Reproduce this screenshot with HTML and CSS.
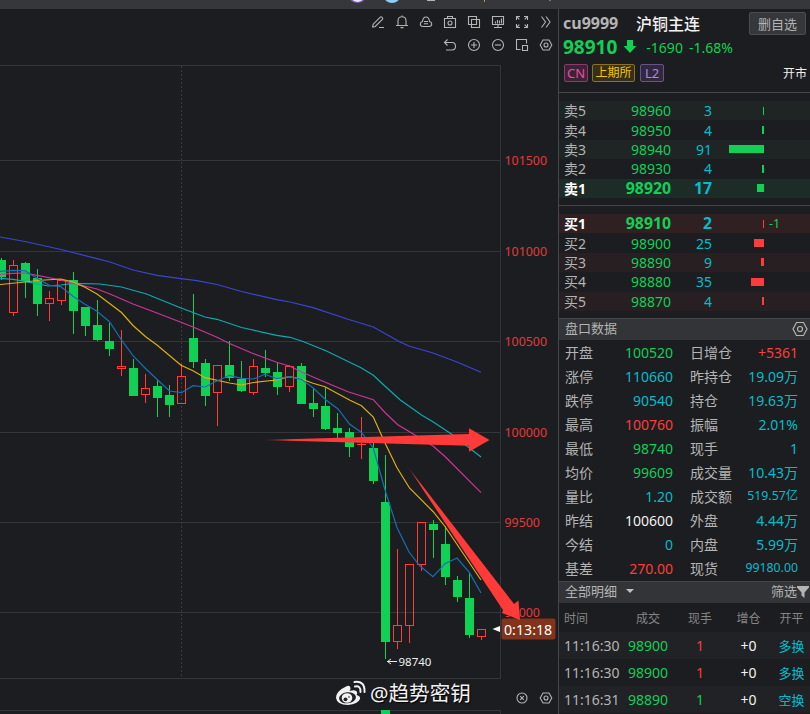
FILE: index.html
```html
<!DOCTYPE html>
<html lang="zh-CN">
<head>
    <meta charset="UTF-8">
    <meta name="viewport" content="width=device-width, initial-scale=1.0">
    <title>沪铜主连 cu9999</title>
    <link rel="stylesheet" href="styles.css">
</head>
<body>
    <div class="top-strip">
        <svg width="810" height="9" viewBox="0 0 810 9">
            <ellipse cx="357.500" cy="-2" rx="7.500" ry="5" fill="#7b5bc0"/>
            <ellipse cx="357.500" cy="-3" rx="6" ry="5" fill="#e9e4f5"/>
            <ellipse cx="392" cy="-4" rx="8" ry="7" fill="#8fcdf5"/>
            <rect x="427" y="0" width="8" height="1" fill="#b5b5b5"/>
            <rect x="484" y="0" width="1" height="2" fill="#d09050"/>
            <rect x="549" y="0" width="2" height="1" fill="#777"/>
        </svg>
    </div>
    <div class="main">
        <div class="chart-area">
            <div class="toolbar">
                <div class="tool-row">
                    <svg class="icon" viewBox="0 0 14 14"><path d="M1.500 12.300L2.200 9.200L9.300 2.100Q10 1.400 10.800 2.200L11.400 2.800Q12.100 3.500 11.400 4.300L4.300 11.500L1.500 12.300M8 12.500H13"/></svg>
                    <svg class="icon" viewBox="0 0 14 14"><path d="M1 10.500H13M3 10.500V5.800Q3 1.800 7 1.800Q11 1.800 11 5.800V10.500M5.500 12.600H8.500M7 .6V1.800"/></svg>
                    <svg class="icon" viewBox="0 0 14 14"><path d="M4 11.500Q1.300 11.500 1.300 9Q1.300 7 3.500 6.500Q4 2 7 2Q10 2 10.500 6.500Q12.700 7 12.700 9Q12.700 11.500 10 11.500ZM5 6.500H9M5 8.700H9"/></svg>
                    <svg class="icon" viewBox="0 0 14 14"><path d="M1.500 3.500H12.500V12.500H1.500ZM4.500 3.500V1.500H9.500V3.500"/><circle cx="7" cy="8" r="2"/></svg>
                    <svg class="icon" viewBox="0 0 14 14"><path d="M1.500 1.500H9.500V9.500H1.500ZM4.500 4.500H12.500V12.500H4.500Z"/></svg>
                    <svg class="icon" viewBox="0 0 14 14"><path d="M1.500 1.500H12.500V9.500H1.500ZM7 9.500V12.500M3 12.500H11M4.500 8.500V6.500M6.500 8.500V5M8.500 8.500V5.500M10.500 8.500V3.500"/></svg>
                    <svg class="icon" viewBox="0 0 14 14"><path d="M1.500 5V1.500H5M9 1.500H12.500V5M12.500 9V12.500H9M5 12.500H1.500V9M2 2L4.300 4.300M12 2L9.700 4.300M2 12L4.300 9.700M12 12L9.700 9.700"/></svg>
                    <svg class="icon" viewBox="0 0 14 14"><path d="M2.500 1.500L6.500 7L2.500 12.500M7 1.500L11 7L7 12.500"/></svg>
                </div>
                <div class="tool-row">
                    <svg class="icon" viewBox="0 0 14 14"><path d="M4.500 1.500L1.500 4.500L4.500 7.500M1.500 4.500H9Q12.500 4.500 12.500 8.300Q12.500 12 9 12H3"/></svg>
                    <svg class="icon" viewBox="0 0 14 14"><circle cx="7" cy="7" r="5.500"/><path d="M4 7H10M7 4V10"/></svg>
                    <svg class="icon" viewBox="0 0 14 14"><circle cx="7" cy="7" r="5.500"/><path d="M4 7H10"/></svg>
                    <svg class="icon" viewBox="0 0 14 14"><path d="M5.500 11.500H1.500V1.500H11.500V5.500M7.500 7.500H12.500V12.500H7.500Z"/></svg>
                    <svg class="icon" viewBox="0 0 14 14"><path d="M4 2H10L12.800 7L10 12H4L1.200 7Z"/><circle cx="7" cy="7" r="2"/></svg>
                </div>
            </div>
            <svg class="chart" id="chart" width="558" height="649" viewBox="0 65 558 649">
                <defs>
                    <linearGradient id="fadeH" x1="0" x2="1" y1="0" y2="0">
                        <stop offset="0" stop-color="#ff3a38" stop-opacity="0.200"/>
                        <stop offset="0.120" stop-color="#ff3a38"/>
                    </linearGradient>
                    <linearGradient id="fadeD" x1="0" x2="1" y1="0" y2="1">
                        <stop offset="0" stop-color="#ff3a38" stop-opacity="0.400"/>
                        <stop offset="0.120" stop-color="#ff3a38"/>
                    </linearGradient>
                </defs>
                <path class="grid" d="M0 65.500H500.500V678.500H0M0 160.500H500M0 251.500H500M0 341.500H500M0 432.500H500M0 522.500H500M0 612.500H500M0 710.500H500.500V714"/>
                <path class="grid dashed" d="M181.500 66V678"/>
                <g id="candles"></g>
                <rect class="down" x="381" y="710" width="9" height="4"/>
                <polyline class="ma" stroke="#3b45d4" points="0,237 25,241.500 61,249.500 97,258.700 110,262 133,270 157,275.300 181,278.700 197,280.700 217,284.500 241.500,291.500 276.700,299.700 290,302 313,307.700 348,319.300 373.300,327 400,342 409,346 433,353 457,362 481,372.300"/>
                <polyline class="ma" stroke="#09acb4" points="0,278.300 13,279.300 25,281.300 48,286 61,285 73,283.300 100,284 121.500,287 146.500,294 181,308 205,317 217,319.300 241.500,327.500 276.700,335.300 290,337.300 303,341.500 326.500,351 348,361.500 361.500,368 373.300,375.300 386.500,387.500 400,399.800 421.500,415 433.300,422 451.700,434.300 481,457"/>
                <polyline class="ma" stroke="#cd3599" points="0,274.500 12,273.300 25,273 37,275.300 61,280 73,283.300 97,289 110,294 133,304 157,313 181,322.300 193,327 217,337.300 229.500,343.500 253.500,353.700 276.700,362.300 290,366.300 301.500,372 326.500,382.700 348,391.700 373.300,399.700 385,412.500 397.500,424.500 416.500,436 433,446 445,456.500 481,492.700"/>
                <polyline class="ma" stroke="#ddb00b" points="0,284.500 25,282 37,280.500 61,279 73,282 85,287.300 97,294 121.500,312.500 133,325.500 146,337 157,345 181,365.300 193,370.700 205,377.700 229.500,383 241.500,385 253.500,382.500 276.700,380 289,376.700 301.500,379 313,383.300 325,386.700 350,400.300 361.500,405.700 373.300,417 385,443 397,467.700 409.500,488 433,511.500 445,526.500 481,580"/>
                <polyline class="ma" stroke="#176fb4" points="0,271.300 13,270.300 25,270.700 37,278.300 49.500,285.300 61,286.700 73,296.300 85,304.300 97,311.300 109.500,321.700 121.500,340 133,355.700 146,369 158,380.300 169.500,391 181.500,392.700 193,385.700 205,387 217,381 229.500,375.300 241.500,378.300 253.500,379 265,374.300 277,378.700 289,376.700 301.500,379.300 313,387.700 326,400 338,409 349.500,424 361.500,432.500 373.300,448 385,490 397,527.500 409,552 420,566 433,576.700 445,563.700 457,558 469.500,572.700 481,593"/>
                <g class="axis">
                    <text x="504.500" y="165">101500</text>
                    <text x="504.500" y="256">101000</text>
                    <text x="504.500" y="346">100500</text>
                    <text x="504.500" y="437">100000</text>
                    <text x="504.500" y="527">99500</text>
                    <text x="504.500" y="617">99000</text>
                </g>
                <path d="M387 661.500H397M391 659L387.500 661.500L391 664" fill="none" stroke="#e8e8e8"/>
                <text class="low-label" x="398.500" y="666">98740</text>
                <path d="M492.500 629L500 626V632Z" fill="#fff"/>
                <rect x="501.500" y="618.500" width="54" height="21" rx="2" fill="#80341b"/>
                <path d="M262 440L469 434V428.300L489.500 440L469 451.800V445.800Z" fill="url(#fadeH)"/>
                <path d="M408 467L503 610L502 613L520 620L518.500 600.500L514 604Z" fill="url(#fadeD)"/>
                <text class="countdown" x="504" y="635">0:13:18</text>
            </svg>
            <div class="watermark">
                <svg width="31" height="27" viewBox="0 0 31 27">
                    <path fill="#f1f1f1" d="M12 6Q15 5 15.500 8Q15.500 10 14.500 11Q21 9 22 12Q22.500 14 21.500 15Q26 16.500 25 19Q23 24 13 25Q2 25 1 18Q1 11 12 6Z"/>
                    <ellipse cx="12.500" cy="17.800" rx="8.500" ry="5.500" transform="rotate(-7 12.500 17.800)" fill="#202124"/>
                    <ellipse cx="12" cy="18" rx="5.300" ry="4.800" fill="#f1f1f1"/>
                    <circle cx="10.500" cy="19.300" r="1.900" fill="#202124"/>
                    <circle cx="14" cy="17" r=".8" fill="#202124"/>
                    <path d="M20 6.500Q26 5.500 25.500 12M19.500 2Q30 .5 29.500 12" fill="none" stroke="#f1f1f1" stroke-width="2" stroke-linecap="round"/>
                </svg>
                <span>@趋势密钥</span>
            </div>
            <div class="pane-tools">
                <svg class="icon" viewBox="0 0 14 14"><circle cx="7" cy="7" r="5"/><path d="M5.200 5.200L8.800 8.800M8.800 5.200L5.200 8.800"/></svg>
                <svg class="icon" viewBox="0 0 14 14"><path d="M4 2H10L12.800 7L10 12H4L1.200 7Z"/><circle cx="7" cy="7" r="2"/></svg>
            </div>
        </div>

        <div class="side">
            <div class="quote">
                <div class="name-row">
                    <span class="code">cu9999</span>
                    <span class="name">沪铜主连</span>
                    <button class="remove">删自选</button>
                </div>
                <div class="price-row">
                    <span class="price">98910</span>
                    <svg width="14" height="14" viewBox="0 0 14 14"><path d="M4 0H10V6H13.500L7 13L.5 6H4Z" fill="#12cf56"/></svg>
                    <span>-1690</span>
                    <span>-1.68%</span>
                </div>
                <div class="tag-row">
                    <span class="tag cn">CN</span>
                    <span class="tag ex">上期所</span>
                    <span class="tag l2">L2</span>
                    <span class="state">开市</span>
                </div>
            </div>

            <div class="book sell">
                <div class="level"><span>卖5</span><b>98960</b><i>3</i><em style="width: 1px"></em></div>
                <div class="level"><span>卖4</span><b>98950</b><i>4</i><em style="width: 2px"></em></div>
                <div class="level"><span>卖3</span><b>98940</b><i>91</i><em style="width: 35px"></em></div>
                <div class="level"><span>卖2</span><b>98930</b><i>4</i><em style="width: 2px"></em></div>
                <div class="level best"><span>卖1</span><b>98920</b><i>17</i><em style="width: 7px"></em></div>
            </div>
            <div class="book buy">
                <div class="level best"><span>买1</span><b>98910</b><i>2</i><em style="width: 1px"></em><small>-1</small></div>
                <div class="level"><span>买2</span><b>98900</b><i>25</i><em style="width: 10px"></em></div>
                <div class="level"><span>买3</span><b>98890</b><i>9</i><em style="width: 3px"></em></div>
                <div class="level"><span>买4</span><b>98880</b><i>35</i><em style="width: 13px"></em></div>
                <div class="level"><span>买5</span><b>98870</b><i>4</i><em style="width: 2px"></em></div>
            </div>

            <div class="section-bar">
                <span>盘口数据</span>
                <svg class="gear" width="16" height="16" viewBox="0 0 16 16"><path d="M4.500 1.500H11.500L15 8L11.500 14.500H4.500L1 8Z"/><circle cx="8" cy="8" r="2.500"/></svg>
            </div>
            <div class="stats">
                <span>开盘</span><b class="green">100520</b><span>日增仓</span><b class="red">+5361</b>
                <span>涨停</span><b>110660</b><span>昨持仓</span><b>19.09万</b>
                <span>跌停</span><b>90540</b><span>持仓</span><b>19.63万</b>
                <span>最高</span><b class="red">100760</b><span>振幅</span><b>2.01%</b>
                <span>最低</span><b class="green">98740</b><span>现手</span><b>1</b>
                <span>均价</span><b class="green">99609</b><span>成交量</span><b>10.43万</b>
                <span>量比</span><b>1.20</b><span>成交额</span><b class="small">519.57亿</b>
                <span>昨结</span><b class="white">100600</b><span>外盘</span><b>4.44万</b>
                <span>今结</span><b>0</b><span>内盘</span><b>5.99万</b>
                <span>基差</span><b class="red">270.00</b><span>现货</span><b class="small">99180.00</b>
            </div>

            <div class="section-bar detail-bar">
                <span>全部明细</span>
                <svg width="8" height="5" viewBox="0 0 8 5"><path d="M0 0H8L4 4Z" fill="#c0c0c0"/></svg>
                <span class="filter">筛选</span>
                <svg width="12" height="12" viewBox="0 0 12 12"><path d="M0 0H12V1.500L7.500 6.500V12L4.500 9.500V6.500L0 1.500Z" fill="#b5b5b5"/></svg>
            </div>
            <div class="trades">
                <div class="trade head"><span>时间</span><span>成交</span><span>现手</span><span>增仓</span><span>开平</span></div>
                <div class="trade"><span>11:16:30</span><span class="green">98900</span><span class="red">1</span><span class="white">+0</span><span class="cyan">多换</span></div>
                <div class="trade"><span>11:16:30</span><span class="green">98900</span><span class="red">1</span><span class="white">+0</span><span class="cyan">多换</span></div>
                <div class="trade"><span>11:16:31</span><span class="green">98890</span><span class="green">1</span><span class="white">+0</span><span class="cyan">空换</span></div>
            </div>
        </div>
    </div>
    <script src="chart.js"></script>
</body>
</html>
```
FILE: styles.css
```css
* {
    box-sizing: border-box;
}
body {
    margin: 0;
    width: 810px;
    height: 714px;
    overflow: hidden;
    background: #1c1d20;
    color: #b4b4b4;
    font-family: "Noto Sans", "Noto Sans CJK SC", sans-serif;
    font-size: 14px;
}
svg {
    display: block;
    flex: none;
}
.top-strip {
    height: 9px;
    background: #36373a;
}
.main {
    display: flex;
    height: 705px;
}
.chart-area {
    width: 558px;
    flex: none;
    position: relative;
}
.toolbar {
    height: 56px;
    padding: 6px 5px 0 0;
}
.tool-row {
    display: flex;
    justify-content: flex-end;
    gap: 10px;
    height: 23px;
}
.icon {
    width: 14px;
    height: 14px;
    fill: none;
    stroke: #b4b4b4;
    stroke-width: 1.1;
}
.grid {
    fill: none;
    stroke: #353639;
}
.dashed {
    stroke: #3c3d40;
    stroke-dasharray: 2 2;
}
.ma {
    fill: none;
    stroke-width: 1.2;
}
.down {
    fill: #12cf56;
}
.down-wick {
    stroke: #12cf56;
}
.up {
    fill: none;
    stroke: #ff3c3c;
}
.axis {
    fill: #e23a3a;
    font-size: 12.4px;
}
.low-label {
    fill: #f0f0f0;
    font-size: 11.5px;
}
.countdown {
    fill: #fff;
    font-size: 14.2px;
}
.watermark {
    position: absolute;
    left: 335px;
    top: 670px;
    display: flex;
    align-items: center;
    gap: 4px;
    color: #f1f1f1;
    font-size: 20.6px;
    line-height: 28px;
    text-shadow: 1px 1px 1px #000;
    white-space: nowrap;
}
.pane-tools {
    position: absolute;
    right: 5px;
    bottom: 9px;
    display: flex;
    gap: 10px;
}

.side {
    width: 252px;
    border-left: 1px solid #45464a;
    flex: none;
}
.quote {
    height: 84px;
    border-bottom: 1px solid #45464a;
    padding: 2px 4px 0 4px;
}
.name-row {
    display: flex;
    align-items: center;
    height: 24px;
}
.code {
    width: 73px;
    font-size: 16px;
    font-weight: 700;
}
.name {
    color: #f2f2f2;
    font-size: 16px;
    font-weight: 500;
}
.remove {
    margin-left: auto;
    width: 57px;
    height: 23px;
    padding: 0;
    background: #36373a;
    border: 1px solid #4b4c50;
    border-radius: 2px;
    color: #b4b4b4;
    font: 13px/19px "Noto Sans CJK SC", sans-serif;
}
.price-row {
    display: flex;
    align-items: center;
    height: 24px;
    color: #12cf56;
}
.price-row svg {
    margin: 0 9px 0 6px;
}
.price-row span + span {
    margin-left: 6px;
}
.price {
    font-size: 19px;
    font-weight: bold;
}
.tag-row {
    display: flex;
    align-items: center;
    margin: 5px -1px 0 0;
    height: 18px;
}
.tag {
    height: 18px;
    border: 1px solid;
    border-radius: 2px;
    font-size: 13px;
    line-height: 16px;
    text-align: center;
}
.cn {
    width: 24px;
    margin-left: 1px;
    color: #e84fa8;
    background: #3c2335;
    border-color: #8c3a6e;
}
.ex {
    width: 43px;
    margin: 0 5px 0 4px;
    color: #f5c400;
    background: #352f1c;
    border-color: #8b721c;
    font-size: 12px;
}
.l2 {
    width: 24px;
    color: #b086e8;
    background: #30293c;
    border-color: #68528a;
}
.state {
    margin-left: auto;
    color: #f0f0f0;
    font-size: 12px;
}

.book {
    padding-top: 8px;
    height: 113px;
    border-bottom: 1px solid #45464a;
}
.book.buy {
    height: 112px;
    border-bottom: 0;
}
.level {
    display: grid;
    grid-template-columns: 42px 65px 41px 52px 1fr;
    align-items: center;
    height: 19.4px;
    padding-left: 5px;
    line-height: 19px;
}
.level b {
    color: #12cf56;
    font-weight: normal;
    text-align: right;
}
.level i {
    color: #06bccb;
    font-style: normal;
    text-align: right;
}
.level em {
    justify-self: end;
    height: 8px;
    background: #12cf56;
}
.level small {
    margin-left: 5px;
    color: #12cf56;
    font-size: 12.5px;
}
.buy .level em {
    background: #ff3c3c;
}
.sell .level:nth-child(odd) {
    background: #1e2524;
}
.buy .level:nth-child(odd) {
    background: #271f22;
}
.sell .level.best {
    background: #1d2c27;
}
.buy .level.best {
    background: #302022;
}
.best span {
    color: #fff;
    font-weight: bold;
}
.best b,
.best i {
    font-size: 15.8px;
    font-weight: bold;
}

.section-bar {
    display: flex;
    align-items: center;
    justify-content: space-between;
    height: 22px;
    padding: 0 2px 2px 6px;
    background: #333437;
    border-top: 1px solid #45464a;
    font-size: 13px;
    line-height: 19px;
}
.gear {
    fill: none;
    stroke: #b4b4b4;
    stroke-width: 1.2;
}
.stats {
    display: grid;
    grid-template-columns: 48px 60px 64px 61px;
    justify-content: start;
    grid-auto-rows: 24px;
    height: 241px;
    padding: 1px 0 0 6px;
    line-height: 24px;
}
.stats span {
    white-space: nowrap;
}
.stats span:nth-child(4n + 3) {
    padding-left: 17px;
}
.stats b {
    color: #06bccb;
    font-weight: normal;
    justify-self: end;
    white-space: nowrap;
}
.stats b.small {
    font-size: 12.3px;
    line-height: 22px;
}
.stats .green,
.trade .green {
    color: #12cf56;
}
.stats .red,
.trade .red {
    color: #ff3c3c;
}
.stats .white,
.trade .white {
    color: #f2f2f2;
}
.cyan {
    color: #06bccb;
}
.detail-bar {
    justify-content: flex-start;
    padding-right: 1px;
}
.detail-bar svg:nth-child(2) {
    margin-left: 9px;
}
.filter {
    margin-left: auto;
}
.trade {
    display: grid;
    grid-template-columns: 61px 46px 58px 39px 41px;
    align-items: center;
    height: 27px;
    padding-left: 5px;
    white-space: nowrap;
}
.trade span {
    text-align: center;
}
.trade span:first-child {
    text-align: left;
}
.trade span:last-child {
    font-size: 13px;
    padding-left: 6px;
}
.trade:nth-child(even) {
    background: #212225;
}
.trade.head {
    height: 29px;
    color: #858585;
    font-size: 12px;
}
.trade.head span:last-child {
    font-size: 12px;
}
```
FILE: chart.js
```js
// [high, low, body top, body bottom, up], one entry per 12px step
const candles = [
    [258, 280, 260, 277, 0], [260, 316, 265, 313, 1], [262, 298, 263, 281, 0],
    [269, 316, 278, 304, 0], [291, 321, 298, 304, 1], [280, 305, 280, 301, 1],
    [272, 334, 280, 311, 0], [307, 336, 307, 326, 0], [300, 341, 325, 340, 0],
    [323, 356, 341, 349, 0], [330, 376, 366, 369, 1], [359, 396, 368, 396, 0],
    [374, 403, 388, 395, 1], [380, 417, 386, 398, 0], [385, 417, 395, 405, 0],
    [364, 404, 376, 404, 1], [294, 368, 338, 362, 0], [359, 406, 363, 396, 0],
    [365, 426, 365, 393, 1], [341, 381, 365, 378, 0], [361, 392, 379, 391, 0],
    [359, 395, 366, 393, 1], [350, 377, 368, 373, 0], [363, 395, 372, 387, 0],
    [365, 392, 366, 387, 1], [363, 404, 366, 404, 0], [388, 417, 403, 409, 0],
    [387, 430, 406, 429, 0], [413, 438, 428, 433, 0], [428, 457, 432, 447, 0],
    [417, 459, 444, 445, 1], [443, 484, 448, 481, 0], [455, 659, 502, 642, 0],
    [549, 649, 625, 642, 1], [564, 643, 564, 626, 1], [522, 571, 522, 565, 1],
    [520, 558, 524, 530, 0], [526, 585, 544, 577, 0], [576, 602, 580, 597, 0],
    [573, 638, 598, 635, 0], [629, 640, 629, 637, 1]
];

let out = '';
candles.forEach(([high, low, top, bottom, up], i) => {
    const x = 1.5 + i * 12;
    if (up) {
        out += `<path class="up" d="M${x} ${high}V${top}M${x} ${bottom}V${low}"/>`;
        out += `<rect class="up" x="${x - 4}" y="${top + 0.5}" width="8" height="${bottom - top - 1}"/>`;
        if (bottom - top === 1) {
            out += `<path class="up" d="M${x - 4.5} ${top + 0.5}H${x + 4.5}"/>`;
        }
    } else {
        out += `<path class="down-wick" d="M${x} ${high}V${low}"/>`;
        out += `<rect class="down" x="${x - 4.5}" y="${top}" width="9" height="${bottom - top}"/>`;
    }
});
document.getElementById('candles').innerHTML = out;
```
